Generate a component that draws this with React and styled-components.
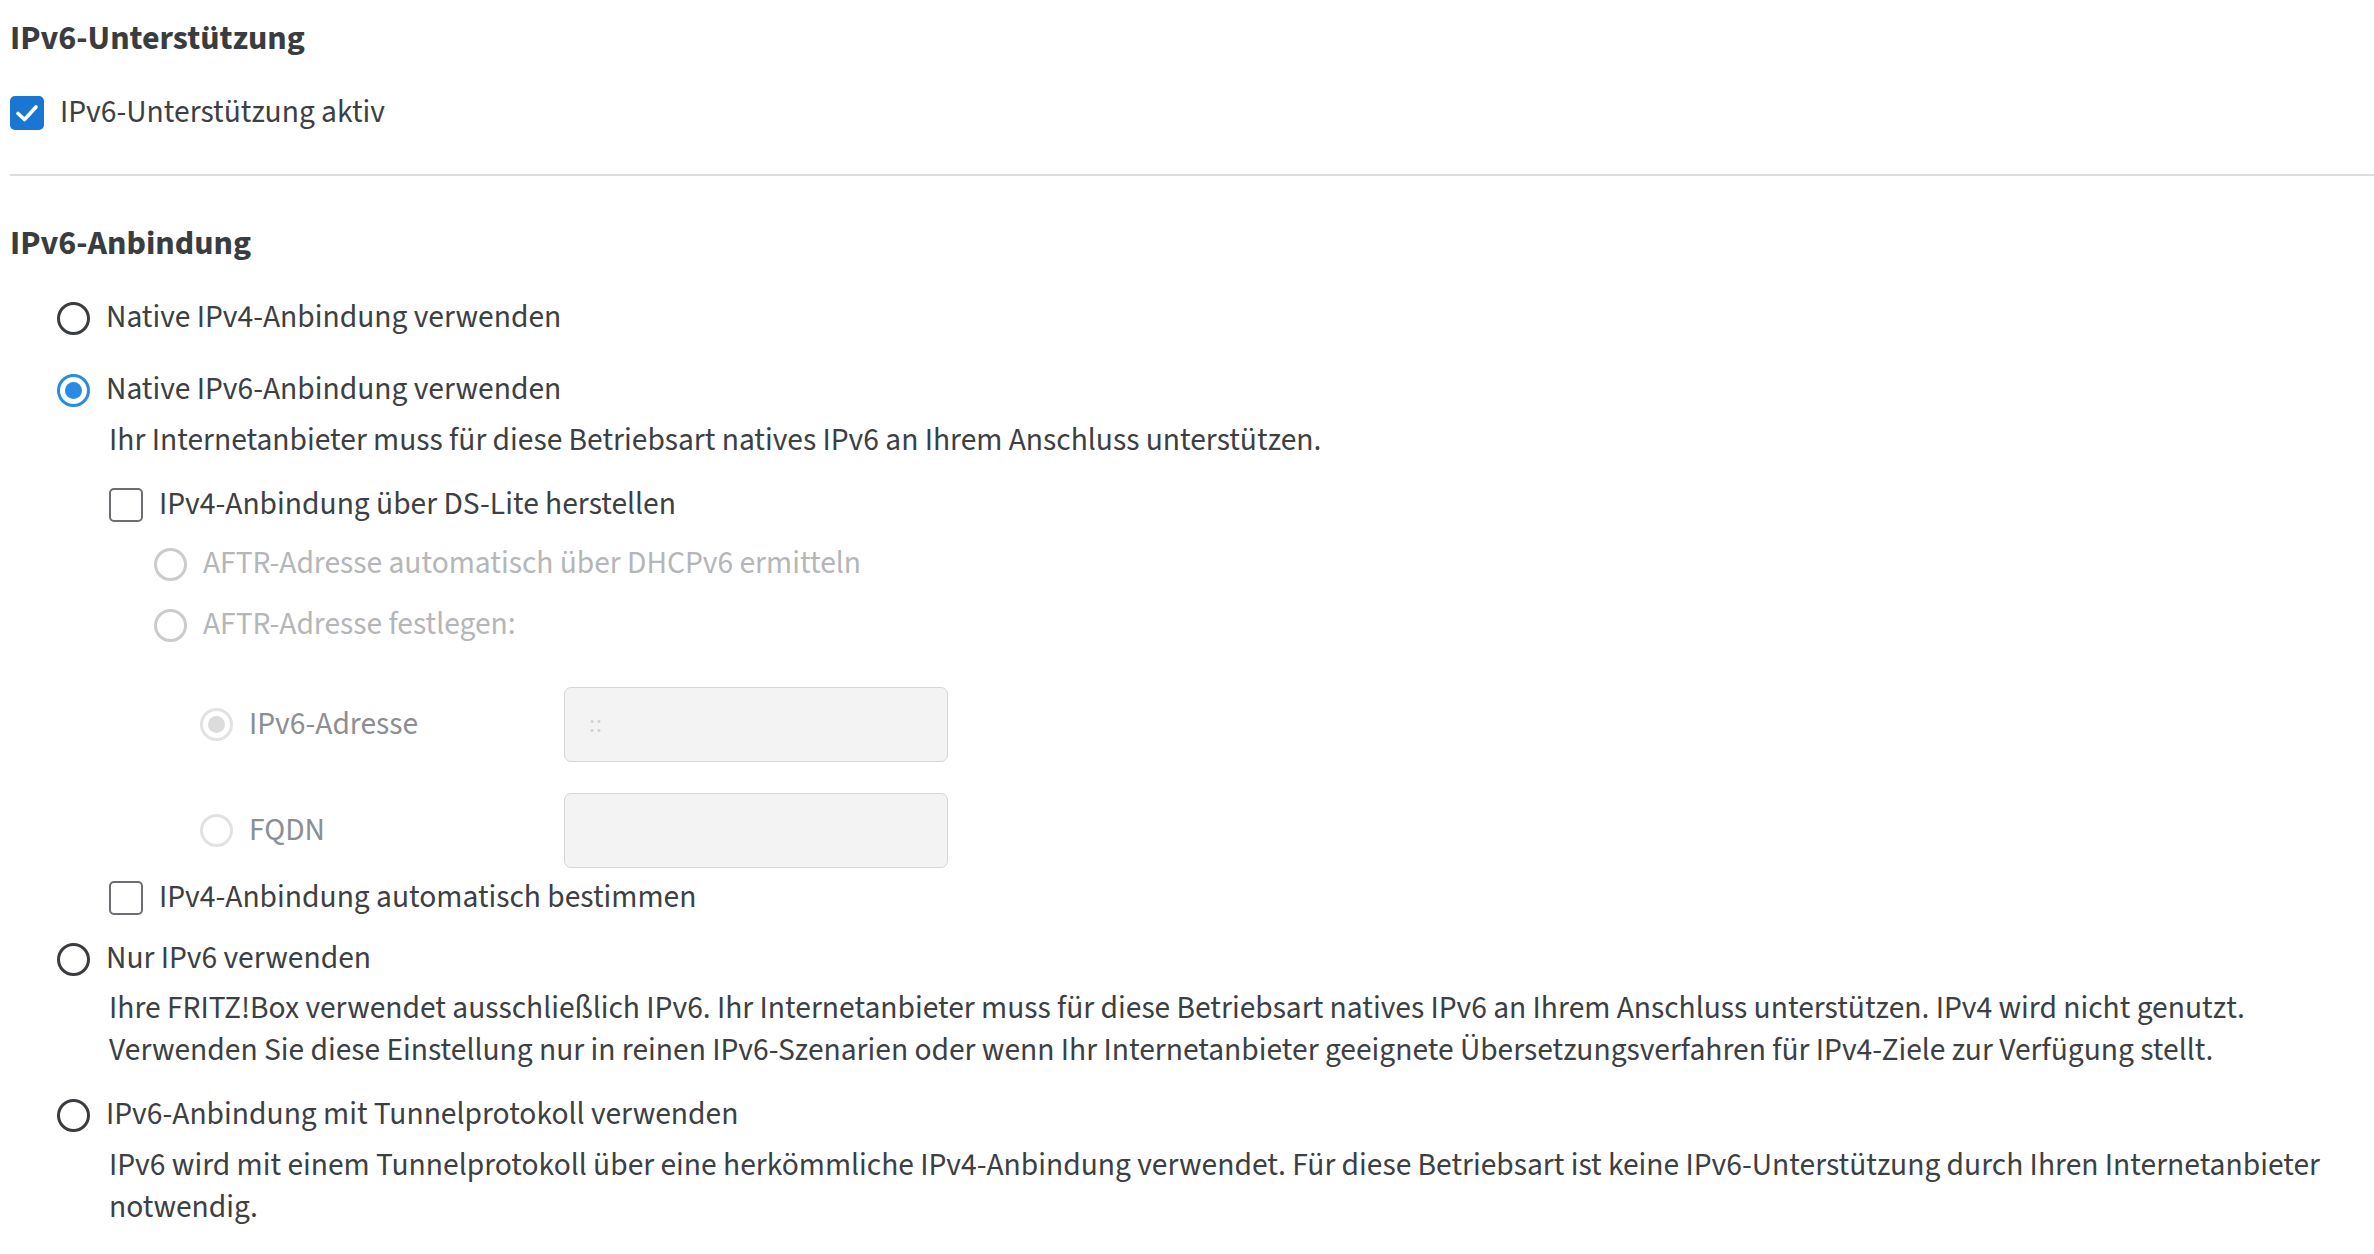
import React from 'react'
import styled, { createGlobalStyle } from 'styled-components'

const GlobalStyle = createGlobalStyle`
  body {
    margin: 0;
    background: #ffffff;
    font-family: "Source Sans Pro", "Source Sans 3", Lato, "Liberation Sans", sans-serif;
    color: #3c4043;
  }
`

const Page = styled.div`
  padding: 18px 0 40px 10px;
`

const Heading = styled.h2`
  margin: ${props => props.top || 0}px 0 0;
  font-size: 34px;
  font-weight: 700;
  line-height: 42px;
  color: #3a3d40;
`

const Divider = styled.hr`
  margin: 40px 0 0;
  border: 0;
  height: 2px;
  background: #dcdcdc;
`

const Row = styled.label`
  display: flex;
  align-items: center;
  gap: ${props => props.gap || 16}px;
  margin: ${props => props.top || 0}px 0 0 ${props => props.indent || 0}px;
  font-size: 31.5px;
  line-height: 42px;
  color: ${props => props.muted ? '#b4b6b8' : props.soft ? '#8c8f92' : '#3c4043'};
`

const Box = styled.span`
  flex: none;
  width: 34px;
  height: 34px;
  box-sizing: border-box;
  border-radius: 5px;
  border: ${props => props.checked ? 'none' : '2.5px solid #6b6f73'};
  background: ${props => props.checked ? '#1976d2' : '#fff'};
  display: flex;
  align-items: center;
  justify-content: center;
`

const Radio = styled.span`
  flex: none;
  width: 33px;
  height: 33px;
  box-sizing: border-box;
  border-radius: 50%;
  border: 3px solid ${props => props.color};
  display: flex;
  align-items: center;
  justify-content: center;

  &::after {
    content: '';
    display: ${props => props.dot ? 'block' : 'none'};
    width: 17px;
    height: 17px;
    border-radius: 50%;
    background: ${props => props.dot};
  }
`

const Desc = styled.p`
  margin: ${props => props.top || 8}px 0 0 ${props => props.indent || 0}px;
  font-size: 31.5px;
  line-height: 42px;
  color: #3c4043;
  white-space: nowrap;
`

const FieldRow = styled.div`
  display: flex;
  align-items: center;
  margin: ${props => props.top || 0}px 0 0 190px;
`

const FieldLabel = styled(Row)`
  width: 364px;
  margin: 0;
`

const Input = styled.div`
  width: 384px;
  height: 75px;
  box-sizing: border-box;
  border: 1px solid #d6d6d6;
  border-radius: 7px;
  background: #f3f3f3;
  padding-left: 24px;
  display: flex;
  align-items: center;
  font-size: 24px;
  color: #cfcfcf;
  letter-spacing: 1px;
`

const Check = () => (
  <svg width="24" height="20" viewBox="0 0 24 20">
    <path d="M3 10.5 L9.5 16.5 L21 4" fill="none" stroke="#fff" strokeWidth="3.6" strokeLinecap="round" strokeLinejoin="round" />
  </svg>
)

const App = () => {
  return (
    <Page>
      <GlobalStyle />
      <Heading>IPv6-Unterstützung</Heading>
      <Row top={32} gap={16}>
        <Box checked><Check /></Box>
        IPv6-Unterstützung aktiv
      </Row>
      <Divider />

      <Heading top={47}>IPv6-Anbindung</Heading>
      <Row top={32} indent={47}>
        <Radio color="#3a3d40" />
        Native IPv4-Anbindung verwenden
      </Row>
      <Row top={30} indent={47}>
        <Radio color="#2b8ae2" dot="#2b8ae2" />
        Native IPv6-Anbindung verwenden
      </Row>
      <Desc top={9} indent={99}>
        Ihr Internetanbieter muss für diese Betriebsart natives IPv6 an Ihrem Anschluss unterstützen.
      </Desc>
      <Row top={22} indent={99}>
        <Box />
        IPv4-Anbindung über DS-Lite herstellen
      </Row>
      <Row top={17} indent={144} muted>
        <Radio color="#cbcbcb" />
        AFTR-Adresse automatisch über DHCPv6 ermitteln
      </Row>
      <Row top={19} indent={144} muted>
        <Radio color="#cbcbcb" />
        AFTR-Adresse festlegen:
      </Row>
      <FieldRow top={41}>
        <FieldLabel soft>
          <Radio color="#e2e2e2" dot="#dcdcdc" />
          IPv6-Adresse
        </FieldLabel>
        <Input>::</Input>
      </FieldRow>
      <FieldRow top={31}>
        <FieldLabel soft>
          <Radio color="#e2e2e2" />
          FQDN
        </FieldLabel>
        <Input />
      </FieldRow>
      <Row top={9} indent={99}>
        <Box />
        IPv4-Anbindung automatisch bestimmen
      </Row>
      <Row top={19} indent={47}>
        <Radio color="#3a3d40" />
        Nur IPv6 verwenden
      </Row>
      <Desc top={8} indent={99}>
        Ihre FRITZ!Box verwendet ausschließlich IPv6. Ihr Internetanbieter muss für diese Betriebsart natives IPv6 an Ihrem Anschluss unterstützen. IPv4 wird nicht genutzt.
        <br />
        Verwenden Sie diese Einstellung nur in reinen IPv6-Szenarien oder wenn Ihr Internetanbieter geeignete Übersetzungsverfahren für IPv4-Ziele zur Verfügung stellt.
      </Desc>
      <Row top={22} indent={47}>
        <Radio color="#3a3d40" />
        IPv6-Anbindung mit Tunnelprotokoll verwenden
      </Row>
      <Desc top={9} indent={99}>
        IPv6 wird mit einem Tunnelprotokoll über eine herkömmliche IPv4-Anbindung verwendet. Für diese Betriebsart ist keine IPv6-Unterstützung durch Ihren Internetanbieter
        <br />
        notwendig.
      </Desc>
    </Page>
  )
}

export default App
